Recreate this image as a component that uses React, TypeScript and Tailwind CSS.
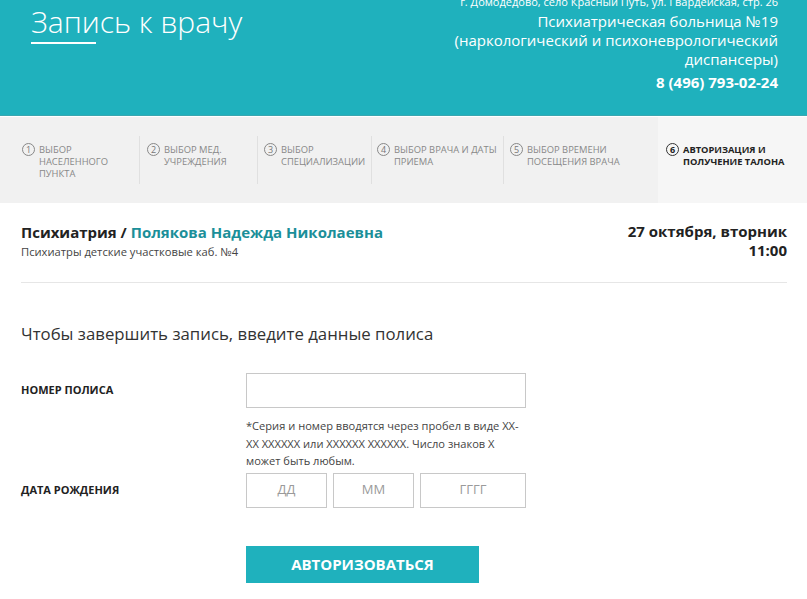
import React from "react";

const steps = [
  { n: "1", lines: ["ВЫБОР", "НАСЕЛЕННОГО", "ПУНКТА"], w: "w-[139px]", pl: "pl-[22px]", first: true },
  { n: "2", lines: ["ВЫБОР МЕД.", "УЧРЕЖДЕНИЯ"], w: "w-[118px]", pl: "pl-[7px]" },
  { n: "3", lines: ["ВЫБОР", "СПЕЦИАЛИЗАЦИИ"], w: "w-[114px]", pl: "pl-[6px]" },
  { n: "4", lines: ["ВЫБОР ВРАЧА И ДАТЫ", "ПРИЕМА"], w: "w-[132px]", pl: "pl-[5px]" },
  { n: "5", lines: ["ВЫБОР ВРЕМЕНИ", "ПОСЕЩЕНИЯ ВРАЧА"], w: "w-[155px]", pl: "pl-[6px]" },
];

function Circle({ n, active }: { n: string; active?: boolean }) {
  return (
    <div
      className={
        "w-[13px] h-[13px] rounded-full border flex items-center justify-center text-[9px] leading-none shrink-0 " +
        (active ? "border-[#333] text-[#222] font-bold" : "border-[#888] text-[#777]")
      }
    >
      {n}
    </div>
  );
}

export default function App() {
  return (
    <div className="w-[807px] h-[599px] overflow-hidden bg-white" style={{ fontFamily: '"Open Sans", "Noto Sans", sans-serif' }}>
      {/* Header */}
      <div className="h-[116px] bg-[#1fb1bd] flex justify-between border-b border-[#3aa7b0]">
        <div className="pl-[31px] pt-[2px]">
          <div className="text-[30px] font-light text-white leading-[40px]">Запись к врачу</div>
          <div className="w-[65px] h-[2px] bg-white mt-[0px]"></div>
        </div>
        <div className="pr-[29px] text-right text-white">
          <div className="text-[11px] leading-[14px] mt-[-5px]">г. Домодедово, село Красный Путь, ул. Гвардейская, стр. 26</div>
          <div className="text-[15px] leading-[19px] mt-[3px]">
            Психиатрическая больница №19
            <br />
            (наркологический и психоневрологический
            <br />
            диспансеры)
          </div>
          <div className="text-[15px] leading-[19px] font-bold mt-[4px]">8 (496) 793-02-24</div>
        </div>
      </div>
      <div className="h-[1px] bg-white"></div>
      {/* Steps */}
      <div className="h-[86px] bg-[#f1f1f1] flex">
        {steps.map((s) => (
          <div key={s.n} className={s.w + " " + s.pl + " mt-[19px] h-[48px] " + (s.first ? "" : "border-l border-[#e0e0e0]")}>
            <div className="flex gap-[4px] pt-[7px]">
              <Circle n={s.n} />
              <div className="text-[9.4px] leading-[12px] text-[#888] mt-[1px]">
                {s.lines.map((l, i) => (
                  <div key={i}>{l}</div>
                ))}
              </div>
            </div>
          </div>
        ))}
        <div className="flex-1 bg-[#f6f6f6] pl-[8px] pt-[26px]">
          <div className="flex gap-[4px]">
            <Circle n="6" active />
            <div className="text-[9.3px] leading-[12px] text-[#222] font-bold mt-[1px]">
              <div>АВТОРИЗАЦИЯ И</div>
              <div>ПОЛУЧЕНИЕ ТАЛОНА</div>
            </div>
          </div>
        </div>
      </div>
      {/* Content */}
      <div className="px-[21px] pr-[20px]">
        <div className="flex justify-between pt-[19px] pb-[22px] border-b border-[#e6e6e6]">
          <div>
            <div className="text-[15px] font-bold leading-[20px] text-[#222]">
              Психиатрия / <span className="text-[#1b8f99]">Полякова Надежда Николаевна</span>
            </div>
            <div className="text-[11.2px] leading-[15px] text-[#444] mt-[2px]">Психиатры детские участковые каб. №4</div>
          </div>
          <div className="text-right text-[15px] font-bold leading-[19px] text-[#222]">
            <div>27 октября, вторник</div>
            <div>11:00</div>
          </div>
        </div>
        <div className="text-[16.8px] leading-[22px] text-[#333] mt-[40px]">Чтобы завершить запись, введите данные полиса</div>
        <div className="flex mt-[28px]">
          <div className="w-[225px] pt-[9px] text-[11px] font-bold text-[#222] leading-[15px]">НОМЕР ПОЛИСА</div>
          <div className="w-[280px]">
            <div className="h-[35px] border border-[#c8c8c8]"></div>
            <div className="text-[11.1px] leading-[17.5px] text-[#444] mt-[9px]">
              *Серия и номер вводятся через пробел в виде XX-
              <br />
              XX XXXXXX или XXXXXX XXXXXX. Число знаков X
              <br />
              может быть любым.
            </div>
          </div>
        </div>
        <div className="flex mt-[3px]">
          <div className="w-[225px] pt-[9px] text-[11px] font-bold text-[#222] leading-[15px]">ДАТА РОЖДЕНИЯ</div>
          <div className="flex gap-[6px]">
            <div className="w-[81px] h-[35px] border border-[#c8c8c8] flex items-center justify-center text-[13px] text-[#9a9a9a]">ДД</div>
            <div className="w-[81px] h-[35px] border border-[#c8c8c8] flex items-center justify-center text-[13px] text-[#9a9a9a]">ММ</div>
            <div className="w-[106px] h-[35px] border border-[#c8c8c8] flex items-center justify-center text-[13px] text-[#9a9a9a]">ГГГГ</div>
          </div>
        </div>
        <div className="pl-[225px] mt-[38px]">
          <div className="w-[233px] h-[37px] bg-[#1fb1bd] text-white font-bold text-[15px] flex items-center justify-center">АВТОРИЗОВАТЬСЯ</div>
        </div>
      </div>
    </div>
  );
}
